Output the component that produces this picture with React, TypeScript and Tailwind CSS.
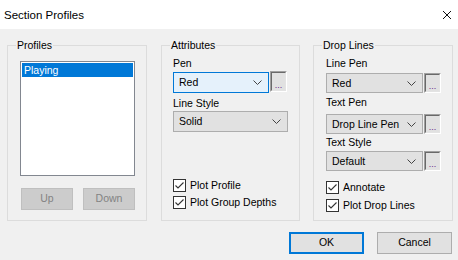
import type { ReactNode } from 'react';

const font = { fontFamily: '"Liberation Sans", Arial, sans-serif' };

function Chevron() {
  return (
    <svg width="9" height="5" viewBox="0 0 9 5" className="shrink-0">
      <path d="M0.5 0.5 L4.5 4.5 L8.5 0.5" fill="none" stroke="#444" strokeWidth="1" />
    </svg>
  );
}

function Combo({ value, width, height = 'h-[21px]', focused = false }: { value: string; width: string; height?: string; focused?: boolean }) {
  return (
    <div
      className={`${width} ${height} flex items-center justify-between pl-[5px] pr-[6px] border ${
        focused ? 'border-[#0078d7] bg-[#e5f1fb]' : 'border-[#adadad] bg-[#e1e1e1]'
      }`}
    >
      <span className="leading-[13px]">{value}</span>
      <Chevron />
    </div>
  );
}

function Ellipsis({ height = 'h-[21px]' }: { height?: string }) {
  return (
    <div className={`w-[17px] ${height} border border-t-[#a0a0a0] border-l-[#a0a0a0] border-b-white border-r-white flex`}>
      <div className="flex-1 border border-t-[#696969] border-l-[#696969] border-b-[#e3e3e3] border-r-[#e3e3e3] bg-[#e1e1e1] flex items-end justify-center pb-[2px]">
        <span className="text-[9px] leading-[6px] text-[#6a2a8a]">...</span>
      </div>
    </div>
  );
}

function Check({ label, rowHeight }: { label: string; rowHeight: string }) {
  return (
    <div className={`flex items-center ${rowHeight}`}>
      <div className="w-[13px] h-[13px] border border-[#333] bg-white flex items-center justify-center">
        <svg width="11" height="11" viewBox="0 0 11 11">
          <path d="M1.5 5.5 L4 8 L9.5 2.5" fill="none" stroke="#333" strokeWidth="1.1" />
        </svg>
      </div>
      <span className="ml-[4px] leading-[13px]">{label}</span>
    </div>
  );
}

function Group({ title, width, children }: { title: string; width: string; children: ReactNode }) {
  return (
    <div className={`relative ${width} h-[176px] border border-[#dcdcdc] flex flex-col`}>
      <span className="absolute left-[8px] -top-[7px] px-[1px] bg-[#f0f0f0] leading-[13px]">{title}</span>
      {children}
    </div>
  );
}

export default function App() {
  return (
    <div className="w-[458px] h-[260px] bg-[#f0f0f0] text-[10.5px] text-black flex flex-col overflow-hidden" style={font}>
      <div className="h-[29px] bg-white flex items-center justify-between pl-[4px] pr-[6px] shrink-0">
        <span className="text-[11.5px] leading-[14px]">Section Profiles</span>
        <svg width="10" height="10" viewBox="0 0 10 10">
          <path d="M1 1 L9 9 M9 1 L1 9" stroke="#111" strokeWidth="1" />
        </svg>
      </div>

      <div className="flex mt-[16px] ml-[7px]">
        <Group title="Profiles" width="w-[140px]">
          <div className="mt-[15px] ml-[12px] w-[115px] h-[115px] border border-[#828790] bg-white p-[1px]">
            <div className="h-[14px] bg-[#0078d7] text-white pl-[2px] leading-[14px]">Playing</div>
          </div>
          <div className="flex mt-[12px] ml-[13px] gap-[10px]">
            <div className="w-[52px] h-[22px] bg-[#cccccc] border border-[#bfbfbf] text-[#838383] flex items-center justify-center">Up</div>
            <div className="w-[52px] h-[22px] bg-[#cccccc] border border-[#bfbfbf] text-[#838383] flex items-center justify-center">Down</div>
          </div>
        </Group>

        <div className="ml-[14px]">
          <Group title="Attributes" width="w-[139px]">
            <div className="flex flex-col pl-[11px]">
              <span className="mt-[11px] leading-[13px]">Pen</span>
              <div className="flex items-start mt-[2px] gap-[1px]">
                <Combo value="Red" width="w-[96px]" focused />
                <div className="-mt-[1px]">
                  <Ellipsis />
                </div>
              </div>
              <span className="mt-[4px] leading-[13px]">Line Style</span>
              <div className="mt-[1px]">
                <Combo value="Solid" width="w-[115px]" />
              </div>
              <div className="mt-[45px]">
                <Check label="Plot Profile" rowHeight="h-[17px]" />
                <Check label="Plot Group Depths" rowHeight="h-[17px]" />
              </div>
            </div>
          </Group>
        </div>

        <div className="ml-[13px]">
          <Group title="Drop Lines" width="w-[140px]">
            <div className="flex flex-col pl-[12px]">
              <span className="mt-[11px] leading-[13px]">Line Pen</span>
              <div className="flex mt-[3px] gap-[1px]">
                <Combo value="Red" width="w-[97px]" height="h-[20px]" />
                <Ellipsis height="h-[20px]" />
              </div>
              <span className="mt-[3px] leading-[13px]">Text Pen</span>
              <div className="flex mt-[5px] gap-[1px]">
                <Combo value="Drop Line Pen" width="w-[97px]" height="h-[20px]" />
                <Ellipsis height="h-[20px]" />
              </div>
              <span className="mt-[2px] leading-[13px]">Text Style</span>
              <div className="flex mt-[2px] gap-[1px]">
                <Combo value="Default" width="w-[97px]" height="h-[20px]" />
                <Ellipsis height="h-[20px]" />
              </div>
              <div className="mt-[7px]">
                <Check label="Annotate" rowHeight="h-[18px]" />
                <Check label="Plot Drop Lines" rowHeight="h-[18px]" />
              </div>
            </div>
          </Group>
        </div>
      </div>

      <div className="flex justify-end mt-[11px] mr-[6px] gap-[13px]">
        <div className="w-[75px] h-[22px] bg-[#e1e1e1] border-2 border-[#0078d7] flex items-center justify-center">OK</div>
        <div className="w-[75px] h-[22px] bg-[#e1e1e1] border border-[#adadad] flex items-center justify-center">Cancel</div>
      </div>
    </div>
  );
}
